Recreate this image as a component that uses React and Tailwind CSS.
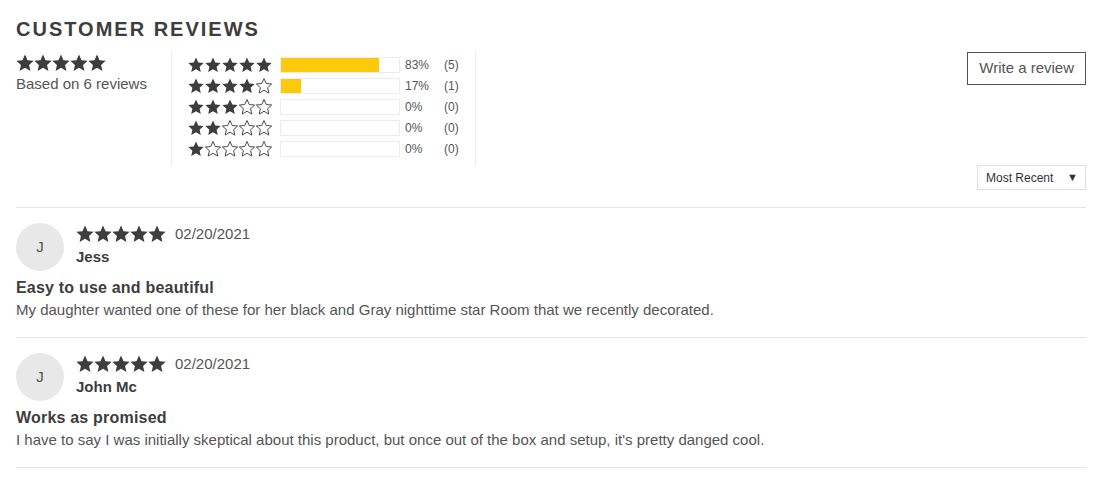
import React from 'react';

const font = { fontFamily: '"Liberation Sans", Arial, sans-serif' };

const Star = ({ filled, size = 16 }) => (
  <svg width={size} height={size} viewBox="0 0 24 24" className="shrink-0">
    <polygon
      points="12,0.8 15.4,8.3 23.5,9 17.4,14.5 19.2,22.6 12,18.4 4.8,22.6 6.6,14.5 0.5,9 8.6,8.3"
      fill={filled ? '#3d3d3d' : 'none'}
      stroke="#3d3d3d"
      strokeWidth={filled ? 0 : 1.4}
      strokeLinejoin="round"
    />
  </svg>
);

const Stars = ({ count, size, gap }) => (
  <div className={`flex ${gap}`}>
    {[1, 2, 3, 4, 5].map((i) => (
      <Star key={i} filled={i <= count} size={size} />
    ))}
  </div>
);

const rows = [
  { stars: 5, pct: 83, count: 5 },
  { stars: 4, pct: 17, count: 1 },
  { stars: 3, pct: 0, count: 0 },
  { stars: 2, pct: 0, count: 0 },
  { stars: 1, pct: 0, count: 0 },
];

const reviews = [
  {
    name: 'Jess',
    date: '02/20/2021',
    title: 'Easy to use and beautiful',
    body: 'My daughter wanted one of these for her black and Gray nighttime star Room that we recently decorated.',
  },
  {
    name: 'John Mc',
    date: '02/20/2021',
    title: 'Works as promised',
    body: "I have to say I was initially skeptical about this product, but once out of the box and setup, it's pretty danged cool.",
  },
];

export default function App() {
  return (
    <div className="bg-white min-h-[479px] pl-4 pr-[10px] pt-[17px] text-[#3d3d3d]" style={font}>
      <h2 className="text-[20px] leading-6 font-bold tracking-[2px] uppercase text-[#3d3d3d]">Customer Reviews</h2>

      <div className="flex mt-[11px]">
        <div className="w-[155px] pt-[2px]">
          <Stars count={5} size={18} gap="gap-0" />
          <div className="text-[15px] leading-5 text-[#555] mt-[2px]">Based on 6 reviews</div>
        </div>

        <div className="border-x border-[#ececec] w-[305px] h-[114px] pl-4 pt-[2px]">
          {rows.map((r) => (
            <div key={r.stars} className="flex items-center h-[21px]">
              <Stars count={r.stars} size={16} gap="gap-[1px]" />
              <div className="ml-2 w-[120px] h-[16px] border border-[#ececec]">
                <div className="h-full bg-[#fcca0b]" style={{ width: `${r.pct}%` }} />
              </div>
              <span className="ml-[5px] w-[39px] text-[12px] text-[#555]">{r.pct}%</span>
              <span className="text-[12px] text-[#555]">({r.count})</span>
            </div>
          ))}
        </div>

        <div className="flex-1 flex flex-col items-end">
          <button className="border border-[#555] h-[33px] px-[11px] text-[15px] text-[#555]">Write a review</button>
          <div className="mt-[80px] border border-[#dddddd] h-[25px] w-[109px] flex items-center justify-between pl-[8px] pr-[7px] text-[12px] text-[#333]">
            <span>Most Recent</span>
            <span className="text-[11px]">▼</span>
          </div>
        </div>
      </div>

      <div className="border-t border-[#e5e5e5] mt-[17px]">
        {reviews.map((rv) => (
          <div key={rv.name} className="border-b border-[#e5e5e5] pt-[15px] pb-[17px]">
            <div className="flex items-start">
              <div className="w-[48px] h-[48px] rounded-full bg-[#e8e8e8] flex items-center justify-center text-[15px] text-[#555]">
                J
              </div>
              <div className="ml-3 pt-[2px]">
                <div className="flex items-center h-[18px]">
                  <Stars count={5} size={18} gap="gap-0" />
                  <span className="ml-[9px] text-[15px] text-[#555]">{rv.date}</span>
                </div>
                <div className="text-[15px] leading-5 font-bold text-[#3d3d3d] mt-[4px]">{rv.name}</div>
              </div>
            </div>
            <div className="text-[16px] font-bold tracking-[0.2px] text-[#3d3d3d] mt-[7px] leading-5">{rv.title}</div>
            <div className="text-[15px] text-[#555] mt-[2px] leading-5">{rv.body}</div>
          </div>
        ))}
      </div>
    </div>
  );
}
